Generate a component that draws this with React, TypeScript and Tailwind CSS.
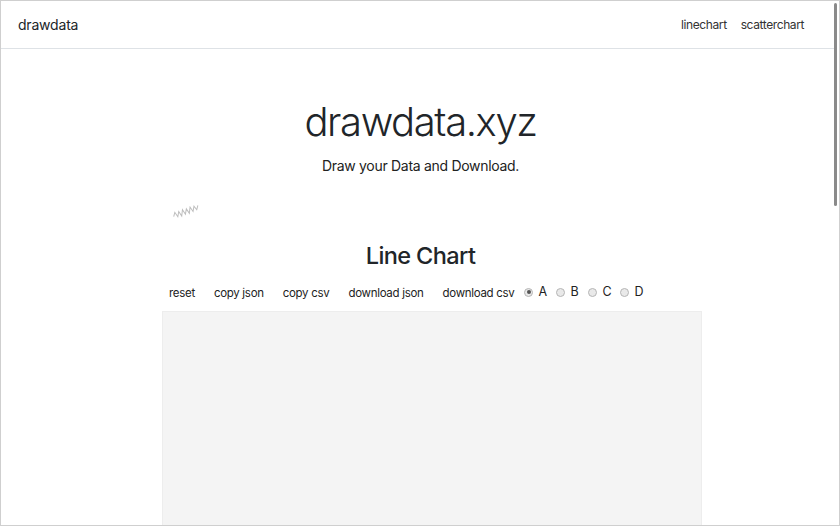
import React from 'react';

const actions = ['reset', 'copy json', 'copy csv', 'download json', 'download csv'];
const series = ['A', 'B', 'C', 'D'];

function Squiggle() {
  // tiny scribble left over on the page
  return (
    <svg width="28" height="14" viewBox="0 0 28 14" className="-rotate-12">
      <path
        d="M1 9 L3 5 L5 10 L7 5 L9 10 L11 4 L13 9 L15 4 L17 9 L19 3 L21 8 L23 3 L25 7 L27 3"
        fill="none"
        stroke="#bdbdbd"
        strokeWidth="1"
      />
    </svg>
  );
}

function Radio({ label, checked }: { label: string; checked?: boolean }) {
  return (
    <div className="flex items-center gap-[5px] w-[32px]">
      <span className="w-[9px] h-[9px] rounded-full border border-[#b5b5b5] bg-[#e9e9e9] flex items-center justify-center">
        {checked && <span className="w-[4px] h-[4px] rounded-full bg-[#555]" />}
      </span>
      <span className="text-[12.5px] text-[#222222]">{label}</span>
    </div>
  );
}

export default function App() {
  return (
    <div
      className="w-[840px] h-[526px] border border-[#cfcfcf] overflow-hidden flex bg-white text-[#212529]"
      style={{ fontFamily: 'Inter, "Helvetica Neue", Arial, sans-serif' }}
    >
      <div className="flex-1 flex flex-col overflow-hidden">
        {/* Navbar */}
        <nav className="h-[48px] shrink-0 border-b border-[#dee2e6] flex items-center justify-between pl-[17px] pr-[30px]">
          <span className="text-[14px] tracking-[-0.2px] text-[#212529]">drawdata</span>
          <div className="flex gap-[14px] text-[12px] tracking-[-0.4px] text-[#333]">
            <a>linechart</a>
            <a>scatterchart</a>
          </div>
        </nav>

        {/* Hero */}
        <div className="shrink-0 flex flex-col items-center pl-[6px]">
          <h1 className="mt-[49px] text-[40px] leading-[48px] font-light tracking-[-1.4px]">drawdata.xyz</h1>
          <p className="mt-[9px] text-[14px] leading-[22px] tracking-[-0.3px] text-[#222]">
            Draw your Data and Download.
          </p>
        </div>

        <div className="shrink-0 w-[540px] ml-[161px] h-[30px] mt-[20px] pl-[10px] flex items-center">
          <Squiggle />
        </div>

        <h2 className="shrink-0 mt-[13px] pl-[6px] text-center text-[23.5px] leading-[32px] font-medium tracking-[-0.6px]">
          Line Chart
        </h2>

        <div className="shrink-0 w-[540px] ml-[161px] flex flex-col">
          <div className="mt-[10px] h-[24px] flex items-center pl-[7px] text-[11.5px] tracking-[-0.3px] text-[#222]">
            {actions.map((a) => (
              <button key={a} className="mr-[19px] whitespace-nowrap">
                {a}
              </button>
            ))}
            <div className="flex items-center -ml-[9px] -mt-[4px]">
              {series.map((s, i) => (
                <Radio key={s} label={s} checked={i === 0} />
              ))}
            </div>
          </div>
          <div className="mt-[5px] h-[300px] bg-[#f4f4f4] border border-[#ededed]" />
        </div>
      </div>

      {/* Scrollbar */}
      <div className="w-[5px] shrink-0 flex justify-start pt-[2px]">
        <div className="w-[3px] h-[203px] rounded-full bg-[#8a8a8a]" />
      </div>
    </div>
  );
}
